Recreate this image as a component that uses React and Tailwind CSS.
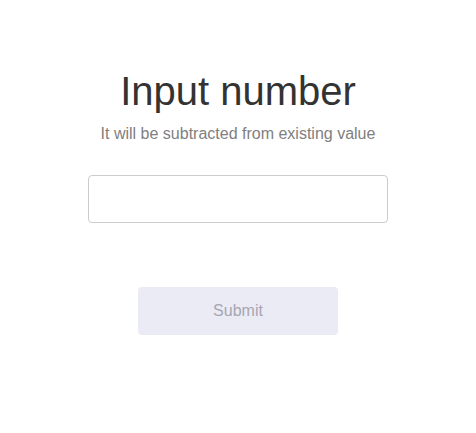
import React, { useState } from "react";

const App = () => {
  const [value, setValue] = useState("");

  return (
    <main
      className="w-[476px] h-[433px] bg-white flex flex-col items-center pt-[67px]"
      style={{ fontFamily: '"Liberation Sans", Arial, sans-serif' }}
    >
      <h1 className="text-[40px] leading-[48px] text-[#333333]">Input number</h1>
      <p className="text-[16px] leading-[20px] text-[#808080] mt-[9px]">
        It will be subtracted from existing value
      </p>

      <input
        type="number"
        value={value}
        onChange={(e) => setValue(e.target.value)}
        className="mt-[31px] w-[300px] h-[48px] border border-[#cccccc] rounded-[4px] px-3 text-[16px] outline-none"
      />

      <button
        type="button"
        disabled
        className="mt-[64px] w-[200px] h-[48px] rounded-[4px] bg-[#ebebf5] text-[#a6a6b3] text-[16px]"
      >
        Submit
      </button>
    </main>
  );
};

export default App;
